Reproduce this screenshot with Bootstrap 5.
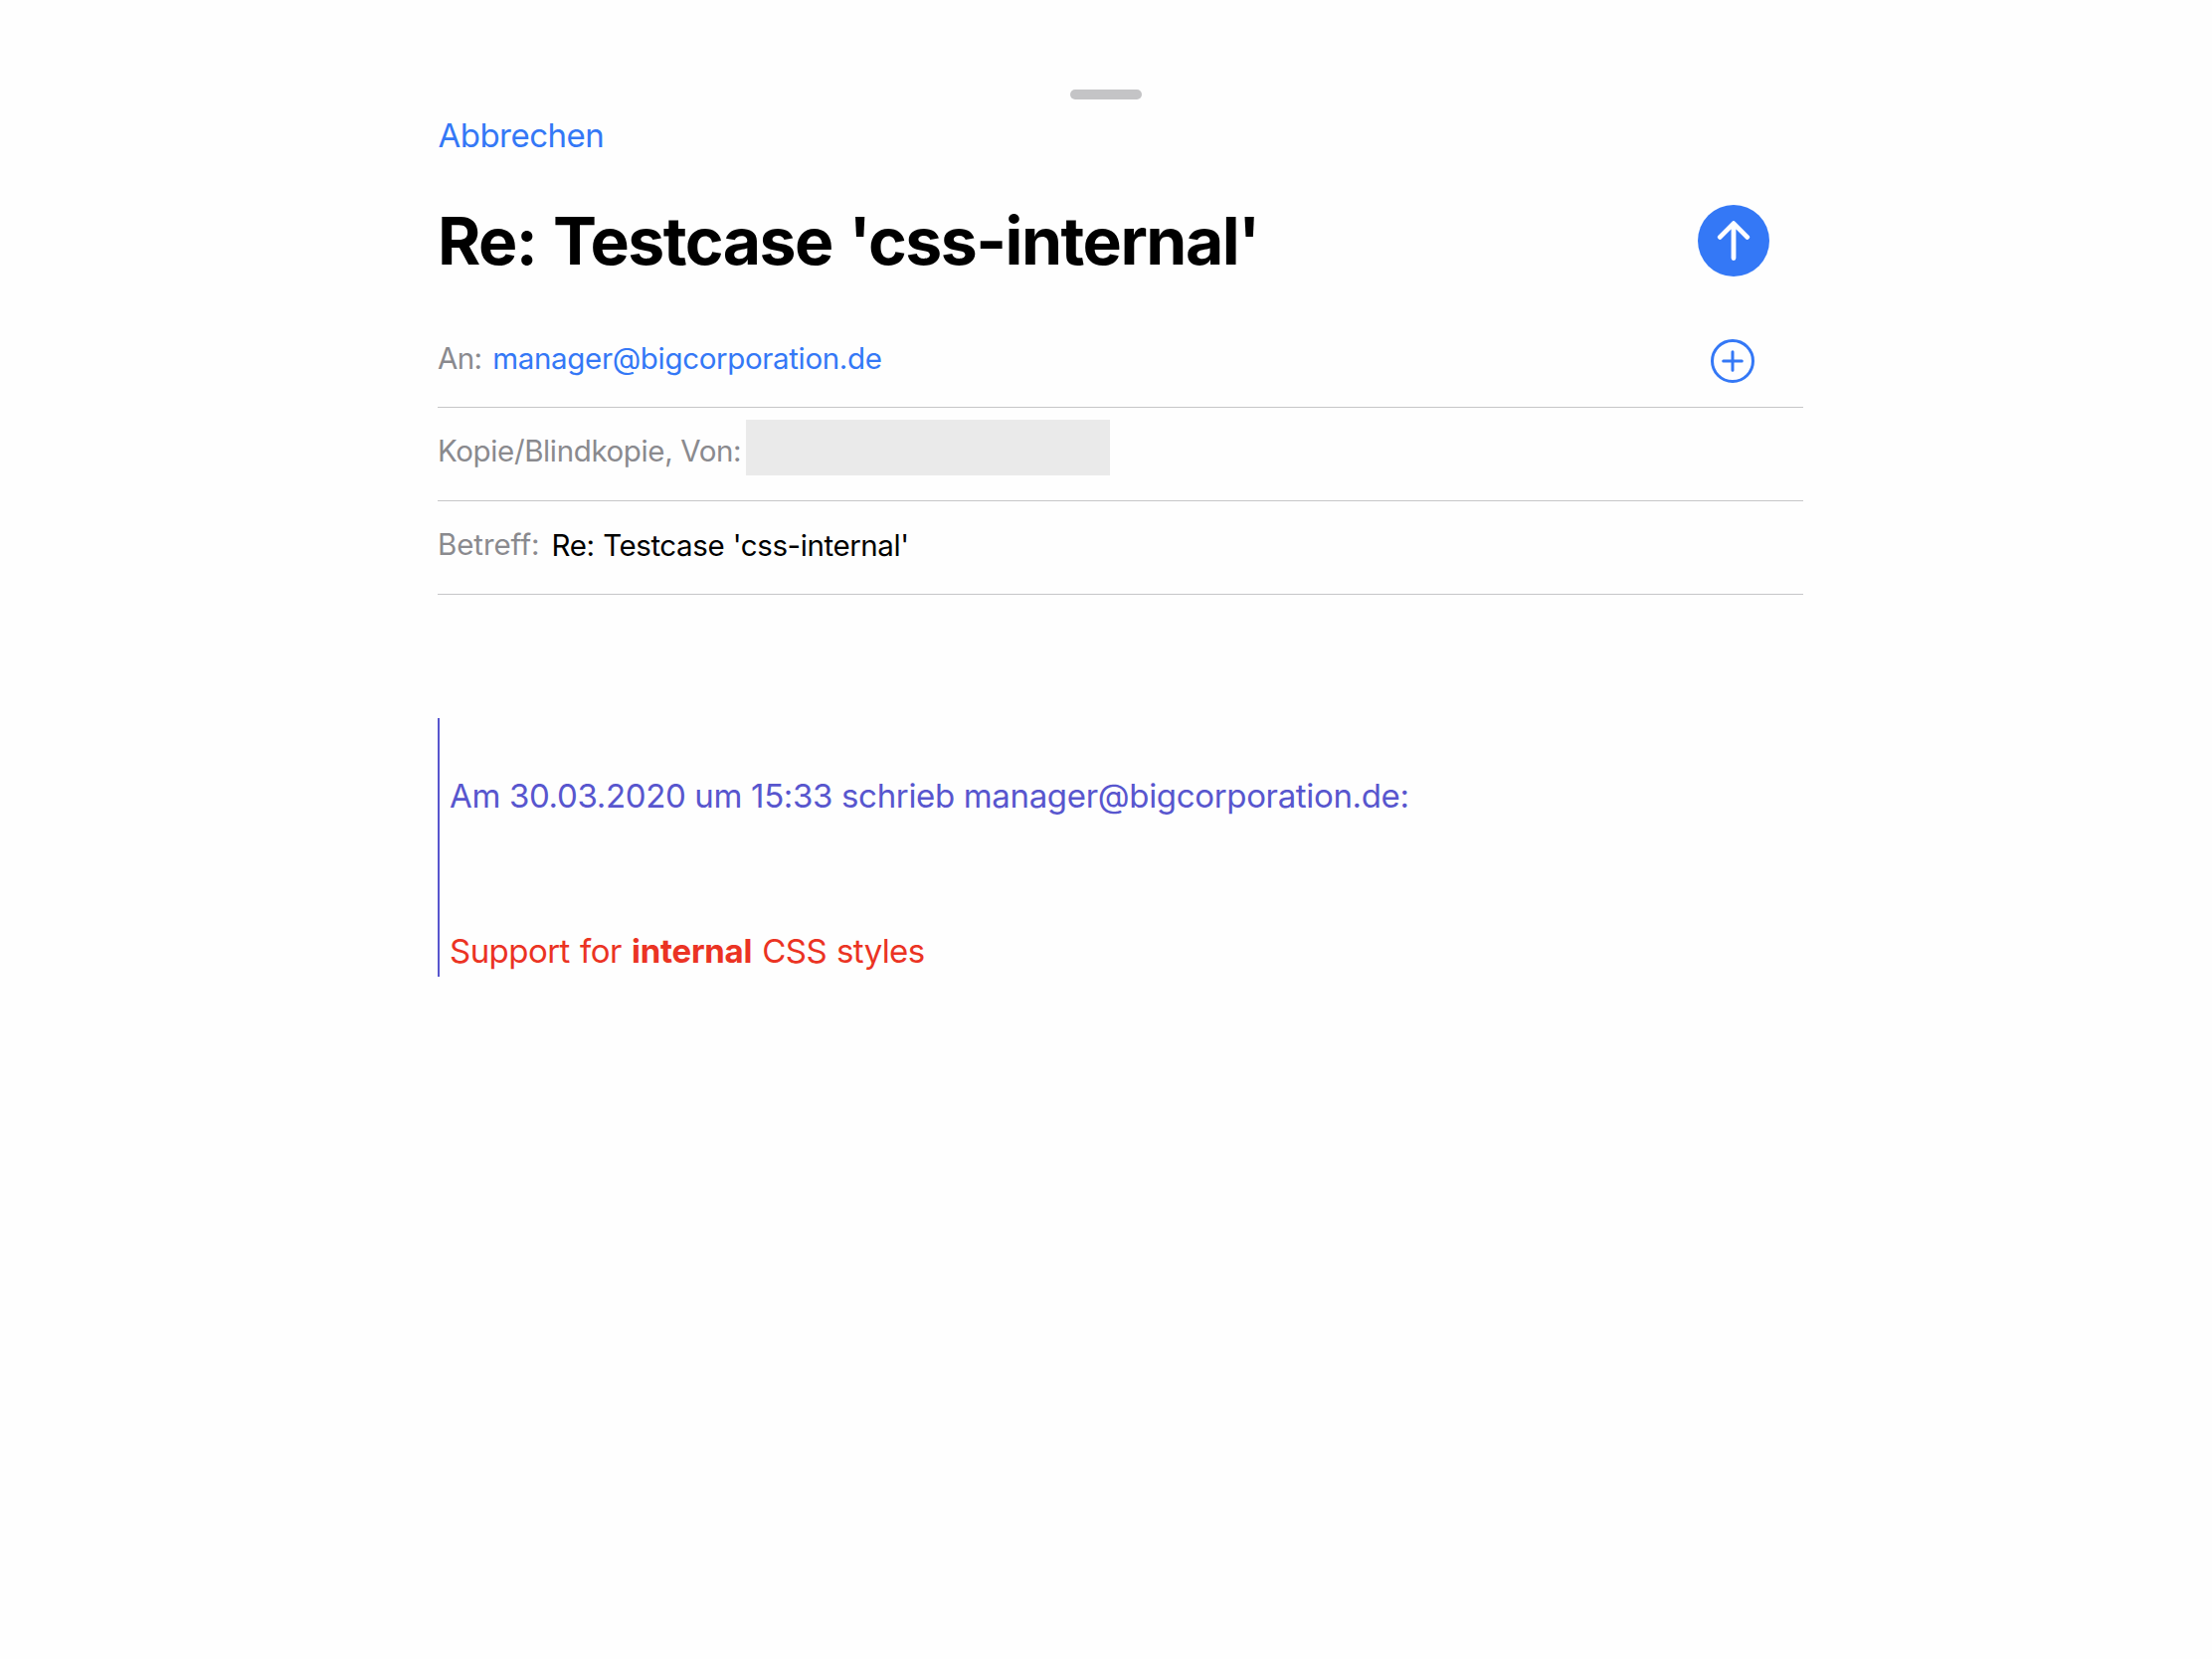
<!DOCTYPE html>
<html lang="de">
<head>
<meta charset="utf-8">
<meta name="viewport" content="width=device-width, initial-scale=1">
<title>Re: Testcase 'css-internal'</title>
<link href="https://cdn.jsdelivr.net/npm/bootstrap@5.3.0/dist/css/bootstrap.min.css" rel="stylesheet">
<style>
  body { font-family: Inter, "Liberation Sans", sans-serif; font-size: 33px; line-height: 40px; color: #000; background: #fefefe; }
  a { color: #3478f6; }
  .grip { width: 72px; height: 10px; margin-top: 90px; background: #c4c4c6; }
  .compose { width: 1373px; margin-left: 440px; }
  .cancel { margin-top: 16px; padding-left: .5px; letter-spacing: -.53px; }
  .title-row { height: 72px; margin-top: 50px; margin-bottom: 38px; padding-right: 34px; }
  .subject-title { font-size: 66px; line-height: 72px; letter-spacing: -1.5px; word-spacing: 2.5px; }
  .field { height: 94px; padding-top: 23px; border-bottom: 1px solid #c6c6c8; font-size: 29.5px; }
  .field-to { padding-top: 24px; padding-right: 49px; }
  .label-to, .label-cc, .label-subject { color: #8a8a8e; }
  .label-to { letter-spacing: -.6px; margin-right: 10.8px; }
  .address { letter-spacing: -.34px; }
  .label-cc { letter-spacing: -.37px; margin-right: 5px; }
  .field-cc { padding-top: 12px; }
  .field-cc .label-cc { margin-top: 11px; }
  .redacted { width: 366px; height: 56px; background: #eaeaea; }
  .label-subject { letter-spacing: -.08px; margin-right: 12px; }
  .subject { letter-spacing: -.42px; word-spacing: .8px; margin-top: 1px; }
  .add { margin-top: 1px; }
  .quoted { margin-top: 124px; height: 260px; padding: 58px 0 6px 10px; border-left: 2px solid #5856ce; color: #5856ce; }
  .attribution { letter-spacing: -.34px; }
  .styled { color: #eb3323; letter-spacing: -.54px; word-spacing: 1.4px; }
  .styled strong { letter-spacing: -.25px; }
  .styled .tail { letter-spacing: -.62px; }
</style>
<script src="https://cdn.jsdelivr.net/npm/bootstrap@5.3.0/dist/js/bootstrap.bundle.min.js"></script>
</head>
<body>
<div class="d-flex justify-content-center">
  <div class="grip rounded-pill"></div>
</div>
<main class="compose">
  <div class="cancel"><a href="#" class="text-decoration-none">Abbrechen</a></div>

  <header class="title-row d-flex align-items-center justify-content-between">
    <h1 class="subject-title fw-bold m-0">Re: Testcase 'css-internal'</h1>
    <a href="#" class="d-flex" aria-label="Senden">
      <svg width="72" height="72" viewBox="0 0 72 72" fill="none">
        <circle cx="36" cy="36" r="36" fill="#3478f6"/>
        <path d="M36 53.5V19M22.3 32.4 36 18.6l13.7 13.8" stroke="#fff" stroke-width="4.8" stroke-linecap="round" stroke-linejoin="round"/>
      </svg>
    </a>
  </header>

  <div class="field field-to d-flex align-items-start">
    <span class="label-to">An:</span>
    <a href="#" class="address text-decoration-none">manager@bigcorporation.de</a>
    <a href="#" class="add d-flex ms-auto" aria-label="Kontakt hinzufügen">
      <svg width="44" height="44" viewBox="0 0 44 44" fill="none" stroke="#3478f6">
        <circle cx="22" cy="22" r="20.5" stroke-width="3"/>
        <path d="M22 12.7v18.6M12.7 22h18.6" stroke-width="3" stroke-linecap="round"/>
      </svg>
    </a>
  </div>
  <div class="field field-cc d-flex align-items-start">
    <span class="label-cc">Kopie/Blindkopie, Von:</span>
    <span class="redacted"></span>
  </div>
  <div class="field d-flex align-items-start">
    <span class="label-subject">Betreff:</span>
    <span class="subject">Re: Testcase 'css-internal'</span>
  </div>

  <blockquote class="quoted d-flex flex-column justify-content-between mb-0">
    <p class="attribution m-0">Am 30.03.2020 um 15:33 schrieb manager@bigcorporation.de:</p>
    <p class="styled m-0">Support for <strong>internal</strong> <span class="tail">CSS styles</span></p>
  </blockquote>
</main>
</body>
</html>
